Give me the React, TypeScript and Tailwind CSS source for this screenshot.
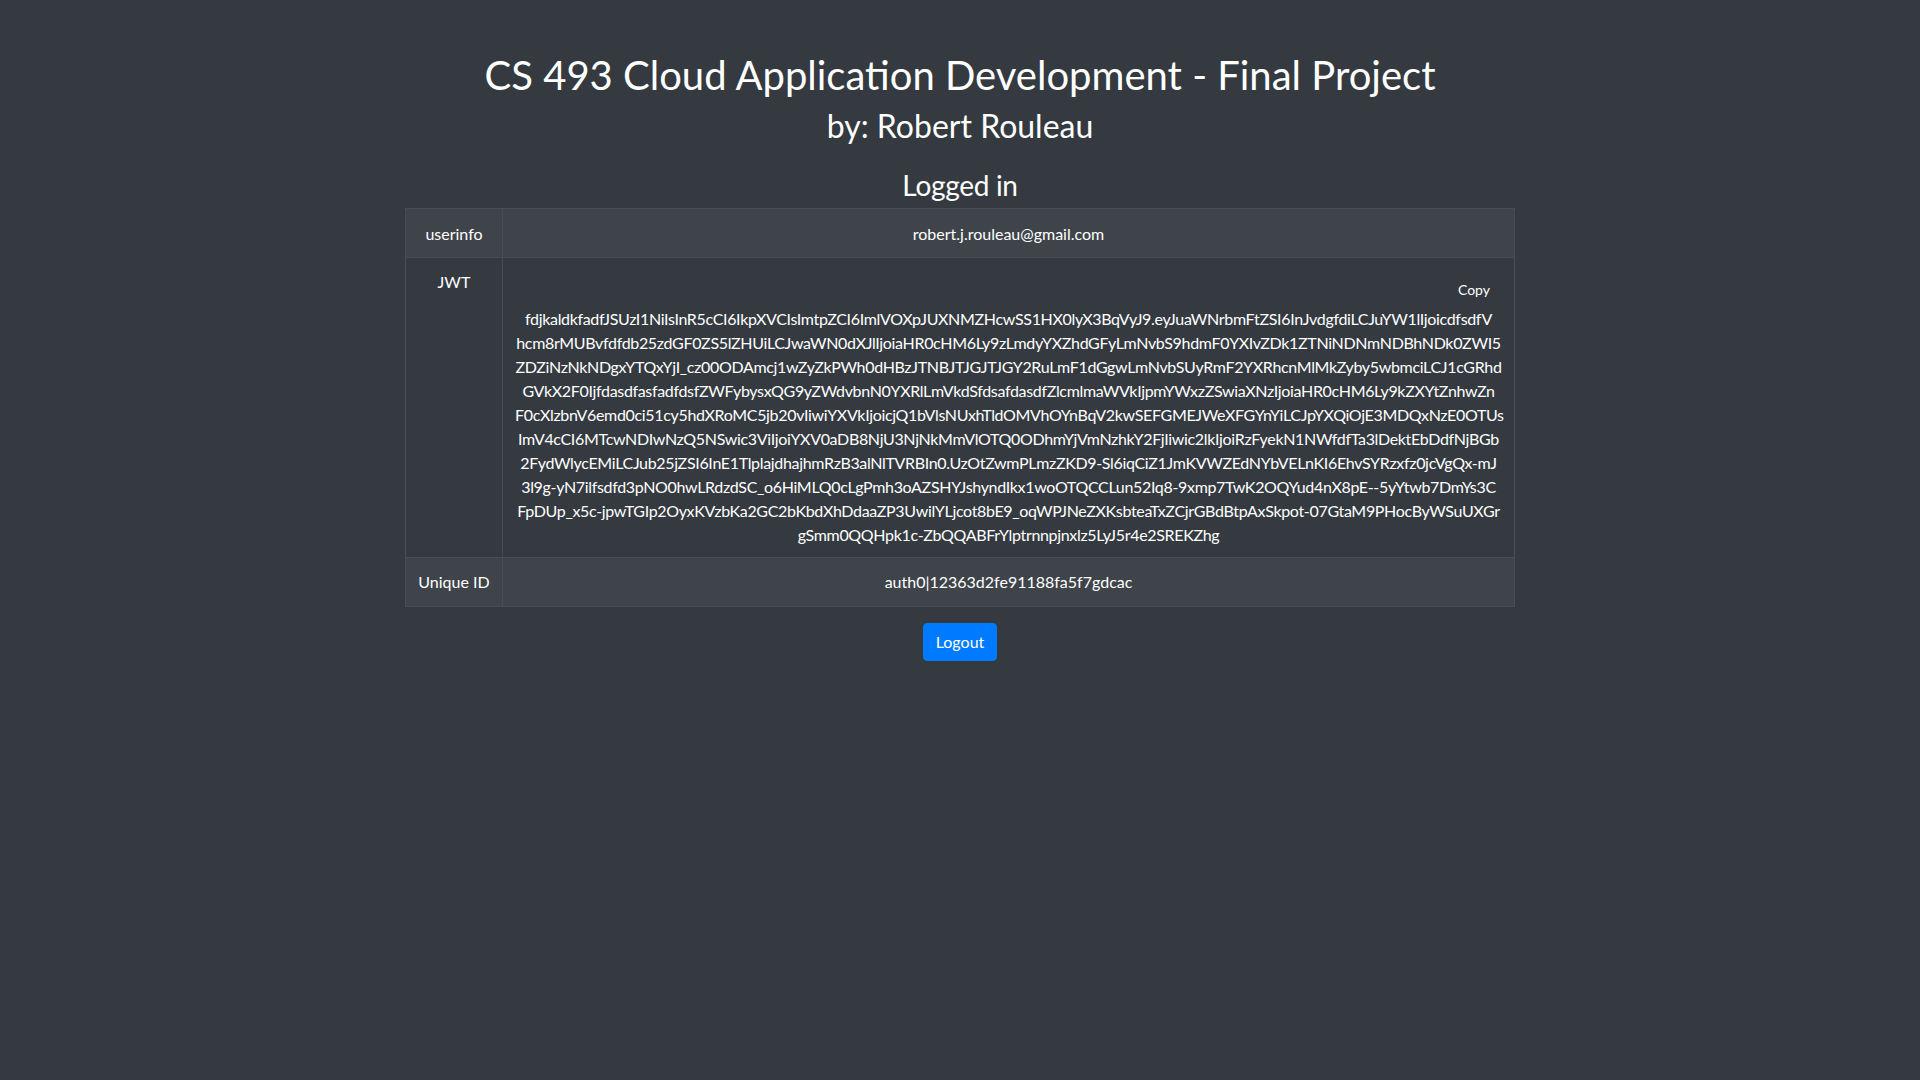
import React from 'react';

const jwtLines = [
  'fdjkaldkfadfJSUzI1NiIsInR5cCI6IkpXVCIsImtpZCI6ImlVOXpJUXNMZHcwSS1HX0lyX3BqVyJ9.eyJuaWNrbmFtZSI6InJvdgfdiLCJuYW1lIjoicdfsdfV',
  'hcm8rMUBvfdfdb25zdGF0ZS5lZHUiLCJwaWN0dXJlIjoiaHR0cHM6Ly9zLmdyYXZhdGFyLmNvbS9hdmF0YXIvZDk1ZTNiNDNmNDBhNDk0ZWI5',
  'ZDZiNzNkNDgxYTQxYjI_cz00ODAmcj1wZyZkPWh0dHBzJTNBJTJGJTJGY2RuLmF1dGgwLmNvbSUyRmF2YXRhcnMlMkZyby5wbmciLCJ1cGRhd',
  'GVkX2F0IjfdasdfasfadfdsfZWFybysxQG9yZWdvbnN0YXRlLmVkdSfdsafdasdfZlcmlmaWVkIjpmYWxzZSwiaXNzIjoiaHR0cHM6Ly9kZXYtZnhwZn',
  'F0cXlzbnV6emd0ci51cy5hdXRoMC5jb20vIiwiYXVkIjoicjQ1bVlsNUxhTldOMVhOYnBqV2kwSEFGMEJWeXFGYnYiLCJpYXQiOjE3MDQxNzE0OTUs',
  'ImV4cCI6MTcwNDIwNzQ5NSwic3ViIjoiYXV0aDB8NjU3NjNkMmVlOTQ0ODhmYjVmNzhkY2FjIiwic2lkIjoiRzFyekN1NWfdfTa3lDektEbDdfNjBGb',
  '2FydWlycEMiLCJub25jZSI6InE1TlplajdhajhmRzB3alNlTVRBIn0.UzOtZwmPLmzZKD9-Sl6iqCiZ1JmKVWZEdNYbVELnKI6EhvSYRzxfz0jcVgQx-mJ',
  '3l9g-yN7ilfsdfd3pNO0hwLRdzdSC_o6HiMLQ0cLgPmh3oAZSHYJshyndIkx1woOTQCCLun52Iq8-9xmp7TwK2OQYud4nX8pE--5yYtwb7DmYs3C',
  'FpDUp_x5c-jpwTGIp2OyxKVzbKa2GC2bKbdXhDdaaZP3UwilYLjcot8bE9_oqWPJNeZXKsbteaTxZCjrGBdBtpAxSkpot-07GtaM9PHocByWSuUXGr',
  'gSmm0QQHpk1c-ZbQQABFrYlptrnnpjnxlz5LyJ5r4e2SREKZhg',
];

const App = () => {
  return (
    <div className="min-h-screen bg-[#343a40] text-white font-['Lato','Noto_Sans',sans-serif] text-base leading-6">
      <div className="mx-auto w-[1140px] px-[15px] pt-[51px] text-center">
        {/* Page header */}
        <h1 className="text-[40px] leading-[48px] mb-2">CS 493 Cloud Application Development - Final Project</h1>
        <h2 className="text-[32px] leading-[38px]">by: Robert Rouleau</h2>
        <h3 className="mt-[23px] mb-[6px] text-[28px] leading-[34px] tracking-[-0.3px]">Logged in</h3>

        {/* User info table */}
        <table className="w-full table-fixed border-collapse border border-[#454d55]">
          <colgroup>
            <col className="w-[97px]" />
            <col />
          </colgroup>
          <tbody>
            <tr className="bg-[#3e444a]">
              <td className="whitespace-nowrap border border-[#454d55] pt-[13px] pb-[11px] px-3 align-top">userinfo</td>
              <td className="border border-[#454d55] pt-[13px] pb-[11px] px-3 align-top">robert.j.rouleau@gmail.com</td>
            </tr>
            <tr>
              <td className="whitespace-nowrap border border-[#454d55] p-3 align-top">JWT</td>
              <td className="border border-[#454d55] pt-3 pb-[10px] px-3 align-top">
                <div className="flex h-[37px] justify-end items-center pt-[3px]">
                  <button className="px-3 text-sm text-white">Copy</button>
                </div>
                <div className="tracking-[-0.33px]">
                  {jwtLines.map((line) => (
                    <div key={line} className="whitespace-nowrap">
                      {line}
                    </div>
                  ))}
                </div>
              </td>
            </tr>
            <tr className="bg-[#3e444a]">
              <td className="whitespace-nowrap border border-[#454d55] p-3 align-top">Unique ID</td>
              <td className="border border-[#454d55] p-3 align-top">auth0|12363d2fe91188fa5f7gdcac</td>
            </tr>
          </tbody>
        </table>

        <button className="mt-4 rounded bg-[#007bff] border border-[#007bff] px-3 py-[6px] text-base leading-6 text-white">
          Logout
        </button>
      </div>
    </div>
  );
};

export default App;
